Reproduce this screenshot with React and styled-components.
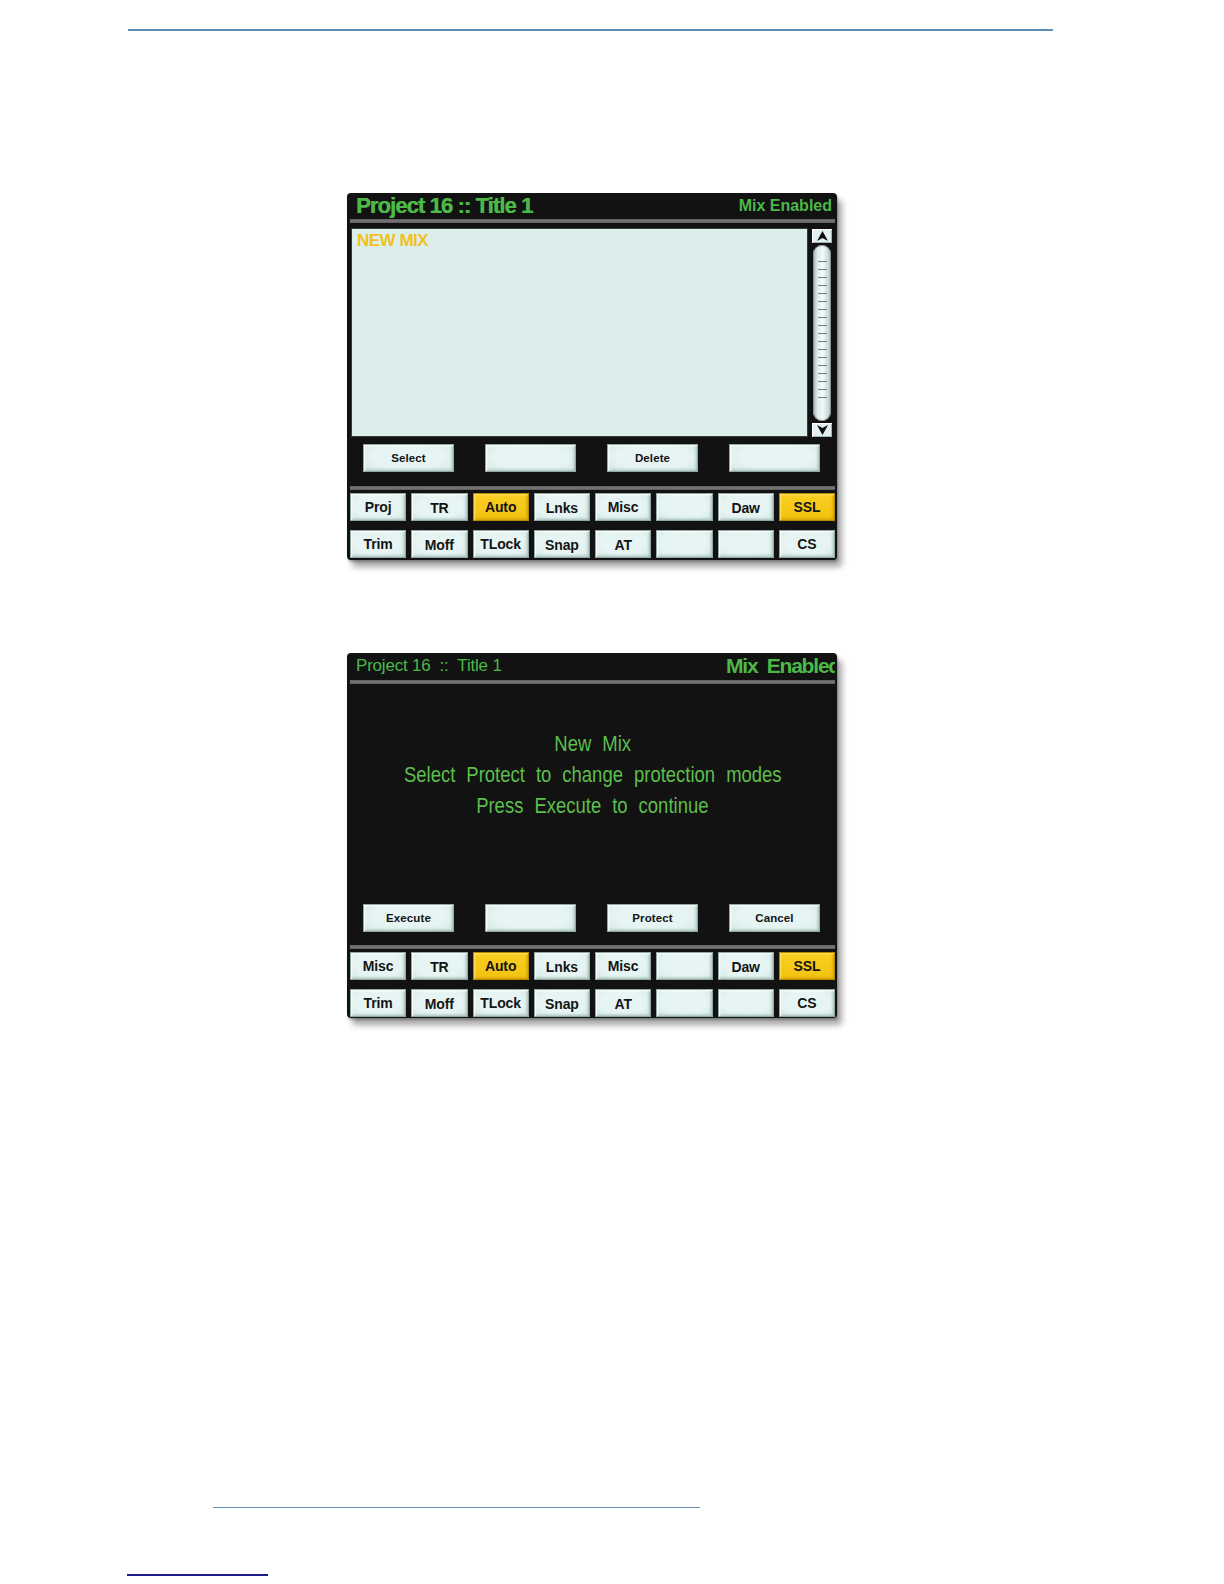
import React from "react";
import styled, { createGlobalStyle, css } from "styled-components";

const GlobalStyle = createGlobalStyle`
  html, body {
    margin: 0;
    padding: 0;
    background: #ffffff;
  }
  body {
    font-family: "Liberation Sans", Arial, sans-serif;
  }
`;

const Page = styled.div`
  width: 1224px;
  min-height: 1584px;
  display: flex;
  flex-direction: column;
`;

const Rule = styled.div`
  height: ${(p) => p.$thick || 1.5}px;
  width: ${(p) => p.$width}px;
  margin-left: ${(p) => p.$left}px;
  margin-top: ${(p) => p.$top}px;
  background: ${(p) => p.$color || "#5f8fb6"};
`;

const Panel = styled.div`
  width: 490px;
  height: ${(p) => p.$height}px;
  margin-left: 347px;
  margin-top: ${(p) => p.$top}px;
  box-sizing: border-box;
  padding: 0 2px 2px 3px;
  background: #121212;
  border-radius: 4px;
  box-shadow: 5px 7px 6px rgba(0, 0, 0, 0.35), 1px 2px 2px rgba(0, 0, 0, 0.25);
  display: flex;
  flex-direction: column;
  overflow: hidden;
`;

const Header = styled.div`
  height: 26px;
  flex: 0 0 26px;
  display: flex;
  align-items: center;
  justify-content: space-between;
  padding: 0 3px 0 6px;
  white-space: pre;
  overflow: hidden;
`;

const Title = styled.div`
  color: #4cb848;
  font-family: "Liberation Sans", Arial, sans-serif;
  ${(p) =>
    p.$bold
      ? css`
          font-weight: 700;
          font-size: 22px;
          letter-spacing: -0.9px;
          text-shadow: 0.4px 0 0 #4cb848;
        `
      : css`
          font-weight: 400;
          font-size: 17px;
          letter-spacing: -0.2px;
        `}
`;

const Status = styled.div`
  color: #4cb848;
  flex-shrink: 0;
  font-family: "Liberation Sans", Arial, sans-serif;
  font-weight: 700;
  ${(p) =>
    p.$bold
      ? css`
          font-size: 21px;
          letter-spacing: -1.2px;
          margin-right: -8px;
        `
      : css`
          font-size: 16px;
        `}
`;

const Divider = styled.div`
  height: 4px;
  flex: 0 0 4px;
  margin-top: ${(p) => p.$top || 0}px;
  background: linear-gradient(#5c5c5c, #7a7a7a 50%, #5a5a5a);
`;

const Main = styled.div`
  margin-top: 5px;
  height: 209px;
  flex: 0 0 209px;
  display: flex;
  gap: 4px;
`;

const ListArea = styled.div`
  width: 457px;
  margin-left: 1px;
  box-sizing: border-box;
  background: #dceeeb;
  border: 1px solid #3a3a3a;
  padding: 3px 5px;
`;

const ListItem = styled.div`
  color: #f0c21a;
  font-family: "Liberation Sans", Arial, sans-serif;
  font-weight: 700;
  font-size: 17px;
  letter-spacing: -0.5px;
  line-height: 18px;
`;

const ScrollBar = styled.div`
  width: 20px;
  display: flex;
  flex-direction: column;
  gap: 2px;
  padding-top: 1px;
`;

const ArrowBox = styled.div`
  height: 14px;
  flex: 0 0 14px;
  background: #e2f1ef;
  box-shadow: inset 1px 1px 0 #ffffff, inset -1px -1px 0 #9fb4b1;
  display: flex;
  align-items: center;
  justify-content: center;
  svg {
    display: block;
  }
`;

const Track = styled.div`
  flex: 1;
  margin: 0 1px;
  border-radius: 9px;
  background: linear-gradient(90deg, #9fb1af, #dfecea 25%, #f2faf9 55%, #c3d3d1 88%, #98aba8);
  box-shadow: inset 0 0 0 1px #7f9390;
  padding: 16px 3px;
  display: flex;
  justify-content: center;
`;

const Ticks = styled.div`
  width: 9px;
  height: 100%;
  background: repeating-linear-gradient(
    180deg,
    #6f7f7c 0px,
    #6f7f7c 1px,
    transparent 1px,
    transparent 8px
  );
`;

const Body = styled.div`
  height: ${(p) => p.$height}px;
  flex: 0 0 ${(p) => p.$height}px;
  box-sizing: border-box;
  padding-top: 44px;
  display: flex;
  flex-direction: column;
  align-items: center;
`;

const MessageLine = styled.div`
  color: #5dbf4d;
  font-family: "Liberation Sans", Arial, sans-serif;
  font-size: 22px;
  line-height: 31px;
  word-spacing: 7px;
  white-space: nowrap;
  transform: scaleX(0.84);
`;

const SoftRow = styled.div`
  margin-top: ${(p) => p.$top}px;
  height: 28px;
  flex: 0 0 28px;
  display: flex;
  gap: 31px;
  padding-left: 13px;
`;

const bevel = css`
  box-sizing: border-box;
  display: flex;
  align-items: center;
  justify-content: center;
  color: #141414;
  font-family: "Liberation Sans", Arial, sans-serif;
  font-weight: 700;
  ${(p) =>
    p.$tone === "yellow"
      ? css`
          background: linear-gradient(#f9cf22, #f3c210);
          box-shadow: inset 0 0 0 1px #b48a00, inset 2px 2px 2px #ffe066,
            inset -2px -2px 3px #c99c05;
        `
      : css`
          background: radial-gradient(ellipse at 50% 45%, #e6f5f3 55%, #d3e6e3 100%);
          box-shadow: inset 0 0 0 1px #8fa8a4, inset 2px 2px 2px #ffffff,
            inset -2px -2px 3px #a3bcb8;
        `}
`;

const SoftButton = styled.div`
  ${bevel}
  width: 91px;
  height: 28px;
  font-size: 11.5px;
  letter-spacing: 0.1px;
`;

const KeyGrid = styled.div`
  margin-top: 3px;
  width: 485px;
  display: grid;
  grid-template-columns: repeat(8, 1fr);
  grid-auto-rows: 28px;
  column-gap: 5px;
  row-gap: 9px;
`;

const Key = styled.div`
  ${bevel}
  font-size: 14px;
  letter-spacing: -0.1px;
  padding-top: ${(p) => (p.$low ? 3 : 0)}px;
`;

const ArrowIcon = ({ down }) => (
  <svg width="13" height="12" viewBox="0 0 13 12">
    <path
      d={down ? "M1 1 L6.5 11 L12 1 L6.5 4 Z" : "M1 11 L6.5 1 L12 11 L6.5 8 Z"}
      fill="#0c0c0c"
    />
  </svg>
);

const KeyBlock = ({ firstKey }) => {
  const row1 = [
    { t: firstKey },
    { t: "TR", low: true },
    { t: "Auto", tone: "yellow" },
    { t: "Lnks", low: true },
    { t: "Misc" },
    { t: "" },
    { t: "Daw", low: true },
    { t: "SSL", tone: "yellow" },
  ];
  const row2 = [
    { t: "Trim" },
    { t: "Moff", low: true },
    { t: "TLock" },
    { t: "Snap", low: true },
    { t: "AT", low: true },
    { t: "" },
    { t: "" },
    { t: "CS" },
  ];
  return (
    <KeyGrid>
      {[...row1, ...row2].map((k, i) => (
        <Key key={i} $tone={k.tone} $low={k.low}>
          {k.t}
        </Key>
      ))}
    </KeyGrid>
  );
};

const App = () => {
  return (
    <Page>
      <GlobalStyle />
      <Rule $left={128} $width={925} $top={29} />

      <Panel $top={162} $height={367}>
        <Header>
          <Title $bold>Project 16 :: Title 1</Title>
          <Status>Mix Enabled</Status>
        </Header>
        <Divider />
        <Main>
          <ListArea>
            <ListItem>NEW MIX</ListItem>
          </ListArea>
          <ScrollBar>
            <ArrowBox>
              <ArrowIcon />
            </ArrowBox>
            <Track>
              <Ticks />
            </Track>
            <ArrowBox>
              <ArrowIcon down />
            </ArrowBox>
          </ScrollBar>
        </Main>
        <SoftRow $top={7}>
          <SoftButton>Select</SoftButton>
          <SoftButton />
          <SoftButton>Delete</SoftButton>
          <SoftButton />
        </SoftRow>
        <Divider $top={14} />
        <KeyBlock firstKey="Proj" />
      </Panel>

      <Panel $top={93} $height={365}>
        <Header>
          <Title>Project 16  ::  Title 1</Title>
          <Status $bold>Mix  Enabled</Status>
        </Header>
        <Divider $top={1} />
        <Body $height={220}>
          <MessageLine>New Mix</MessageLine>
          <MessageLine>Select Protect to change protection modes</MessageLine>
          <MessageLine>Press Execute to continue</MessageLine>
        </Body>
        <SoftRow $top={0}>
          <SoftButton>Execute</SoftButton>
          <SoftButton />
          <SoftButton>Protect</SoftButton>
          <SoftButton>Cancel</SoftButton>
        </SoftRow>
        <Divider $top={13} />
        <KeyBlock firstKey="Misc" />
      </Panel>

      <Rule $left={213} $width={487} $top={489} />
      <Rule $left={127} $width={141} $top={66} $thick={2} $color="#1c1c8c" />
    </Page>
  );
};

export default App;
